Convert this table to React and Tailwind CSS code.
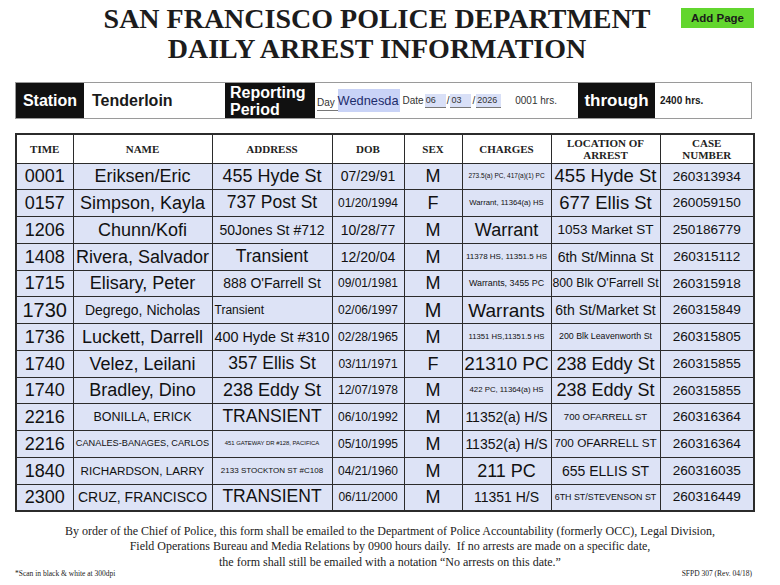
import React from 'react';

const serif = { fontFamily: '"Liberation Serif", "Times New Roman", serif' };

const rows = [
  {
    time: ['0001', 'text-[18px]'],
    name: ['Eriksen/Eric', 'text-[18px]'],
    addr: ['455 Hyde St', 'text-[18px]'],
    dob: ['07/29/91', 'text-[14px]'],
    sex: 'M',
    charges: ['273.5(a) PC, 417(a)(1) PC', 'text-[6.5px]'],
    loc: ['455 Hyde St', 'text-[18.5px]'],
    caseNo: '260313934',
  },
  {
    time: ['0157', 'text-[18px]'],
    name: ['Simpson, Kayla', 'text-[18px]'],
    addr: ['737 Post St', 'text-[17.5px]'],
    dob: ['01/20/1994', 'text-[12px]'],
    sex: 'F',
    charges: ['Warrant, 11364(a) HS', 'text-[7.7px]'],
    loc: ['677 Ellis St', 'text-[18.5px]'],
    caseNo: '260059150',
  },
  {
    time: ['1206', 'text-[18px]'],
    name: ['Chunn/Kofi', 'text-[18px]'],
    addr: ['50Jones St #712', 'text-[14px]'],
    dob: ['10/28/77', 'text-[14px]'],
    sex: 'M',
    charges: ['Warrant', 'text-[18px]'],
    loc: ['1053 Market ST', 'text-[13.5px]'],
    caseNo: '250186779',
  },
  {
    time: ['1408', 'text-[18px]'],
    name: ['Rivera, Salvador', 'text-[18px]'],
    addr: ['Transient', 'text-[17.5px]'],
    dob: ['12/20/04', 'text-[14px]'],
    sex: 'M',
    charges: ['11378 HS, 11351.5 HS', 'text-[8px]'],
    loc: ['6th St/Minna St', 'text-[14px]'],
    caseNo: '260315112',
  },
  {
    time: ['1715', 'text-[18px]'],
    name: ['Elisary, Peter', 'text-[18px]'],
    addr: ['888 O\'Farrell St', 'text-[14px]'],
    dob: ['09/01/1981', 'text-[12px]'],
    sex: 'M',
    charges: ['Warrants, 3455 PC', 'text-[8.9px]'],
    loc: ['800 Blk O\'Farrell St', 'text-[12.3px]'],
    caseNo: '260315918',
  },
  {
    time: ['1730', 'text-[20px]'],
    name: ['Degrego, Nicholas', 'text-[14px]'],
    addr: ['Transient', 'text-[12px]'],
    addrLeft: true,
    dob: ['02/06/1997', 'text-[12px]'],
    sex: 'M',
    sexBig: true,
    charges: ['Warrants', 'text-[19px]'],
    loc: ['6th St/Market St', 'text-[14px]'],
    caseNo: '260315849',
  },
  {
    time: ['1736', 'text-[18px]'],
    name: ['Luckett, Darrell', 'text-[18px]'],
    addr: ['400 Hyde St #310', 'text-[14.4px]'],
    dob: ['02/28/1965', 'text-[12px]'],
    sex: 'M',
    charges: ['11351 HS,11351.5 HS', 'text-[7.7px]'],
    loc: ['200 Blk Leavenworth St', 'text-[8.8px]'],
    caseNo: '260315805',
  },
  {
    time: ['1740', 'text-[18px]'],
    name: ['Velez, Leilani', 'text-[18px]'],
    addr: ['357 Ellis St', 'text-[17.5px]'],
    dob: ['03/11/1971', 'text-[12px]'],
    sex: 'F',
    charges: ['21310 PC', 'text-[19px]'],
    loc: ['238 Eddy St', 'text-[18px]'],
    caseNo: '260315855',
  },
  {
    time: ['1740', 'text-[18px]'],
    name: ['Bradley, Dino', 'text-[18px]'],
    addr: ['238 Eddy St', 'text-[18px]'],
    dob: ['12/07/1978', 'text-[12px]'],
    sex: 'M',
    charges: ['422 PC, 11364(a) HS', 'text-[7.8px]'],
    loc: ['238 Eddy St', 'text-[18px]'],
    caseNo: '260315855',
  },
  {
    time: ['2216', 'text-[18px]'],
    name: ['BONILLA, ERICK', 'text-[12.5px]'],
    addr: ['TRANSIENT', 'text-[17.5px]'],
    dob: ['06/10/1992', 'text-[12px]'],
    sex: 'M',
    charges: ['11352(a) H/S', 'text-[14px]'],
    loc: ['700 OFARRELL ST', 'text-[9.6px]'],
    caseNo: '260316364',
  },
  {
    time: ['2216', 'text-[18px]'],
    name: ['CANALES-BANAGES, CARLOS', 'text-[9.2px]'],
    addr: ['451 GATEWAY DR #128, PACIFICA', 'text-[5.9px]'],
    dob: ['05/10/1995', 'text-[12px]'],
    sex: 'M',
    charges: ['11352(a) H/S', 'text-[14px]'],
    loc: ['700 OFARRELL ST', 'text-[11.8px]'],
    caseNo: '260316364',
  },
  {
    time: ['1840', 'text-[18px]'],
    name: ['RICHARDSON, LARRY', 'text-[11.7px]'],
    addr: ['2133 STOCKTON ST #C108', 'text-[8px]'],
    dob: ['04/21/1960', 'text-[12px]'],
    sex: 'M',
    charges: ['211 PC', 'text-[18px]'],
    loc: ['655 ELLIS ST', 'text-[14px]'],
    caseNo: '260316035',
  },
  {
    time: ['2300', 'text-[18px]'],
    name: ['CRUZ, FRANCISCO', 'text-[14px]'],
    addr: ['TRANSIENT', 'text-[17.5px]'],
    dob: ['06/11/2000', 'text-[12px]'],
    sex: 'M',
    charges: ['11351 H/S', 'text-[14px]'],
    loc: ['6TH ST/STEVENSON ST', 'text-[8.9px]'],
    caseNo: '260316449',
  },
];

const cell = 'border border-[#2b2b2b] bg-[#dde3f6] px-0 text-center align-middle whitespace-nowrap leading-none overflow-hidden text-[#111]';
const head = 'border border-[#2b2b2b] bg-white text-center align-middle font-bold text-[11px] leading-[12px] text-[#222]';

const DateField = ({ value, w }) => (
  <span className={`inline-block ${w} h-[14px] bg-[#d9e0f7] border-b border-[#777] text-[9px] leading-[12px] pl-[1px] text-[#333]`}>
    {value}
  </span>
);

const App = () => {
  return (
    <div
      className="w-[780px] h-[585px] bg-white text-[#1a1a1a] overflow-hidden"
      style={{ fontFamily: '"Liberation Sans", Arial, sans-serif' }}
    >
      {/* title */}
      <div className="w-[754px] grid grid-cols-[1fr_auto_1fr] pt-[4px]">
        <div />
        <h1 className="text-center font-bold text-[28px] leading-[30px] text-[#1c1c1c]" style={serif}>
          SAN FRANCISCO POLICE DEPARTMENT
          <br />
          DAILY ARREST INFORMATION
        </h1>
        <div className="flex justify-end items-start pt-[4px]">
          <button className="bg-[#62d62e] text-[#1a1a1a] font-bold text-[11.5px] h-[20px] w-[73px] leading-[20px]">
            Add Page
          </button>
        </div>
      </div>

      {/* station / reporting period */}
      <div className="mt-[18px] ml-[15px] w-[737px] h-[37px] border border-[#9a9a9a] flex items-stretch">
        <div className="w-[68px] bg-[#111] text-white font-bold text-[16px] flex items-center justify-center">
          Station
        </div>
        <div className="w-[141px] font-bold text-[16px] flex items-center pl-[8px]">Tenderloin</div>
        <div className="w-[90px] bg-[#111] text-white font-bold text-[16px] leading-[17px] flex flex-col justify-center pl-[5px]">
          <span>Reporting</span>
          <span>Period</span>
        </div>
        <div className="w-[263px] flex items-center pl-[2px] text-[#333]">
          <span className="text-[10px] self-end mb-[7px] border-b border-[#777]">Day&nbsp;</span>
          <span className="inline-block w-[62px] h-[23px] bg-[#c9d3f7] text-[12.8px] leading-[23px] whitespace-nowrap text-[#1d2c6b]">
            Wednesda
          </span>
          <span className="text-[10px] ml-[3px] mr-[1px]">Date</span>
          <DateField value="06" w="w-[21px]" />
          <span className="text-[10px] mx-[1px]">/</span>
          <DateField value="03" w="w-[21px]" />
          <span className="text-[10px] mx-[1px]">/</span>
          <DateField value="2026" w="w-[25px]" />
          <span className="text-[10px] ml-[14px]">0001 hrs.</span>
        </div>
        <div className="w-[77px] bg-[#111] text-white font-bold text-[17px] flex items-center justify-center">
          through
        </div>
        <div className="flex-1 font-bold text-[10px] flex items-center pl-[5px]">2400 hrs.</div>
      </div>

      {/* arrests table */}
      <table className="mt-[14px] ml-[15px] w-[738px] table-fixed border-collapse border-2 border-[#2b2b2b]">
        <colgroup>
          <col className="w-[57px]" />
          <col className="w-[139px]" />
          <col className="w-[120px]" />
          <col className="w-[72px]" />
          <col className="w-[58px]" />
          <col className="w-[89px]" />
          <col className="w-[109px]" />
          <col className="w-[94px]" />
        </colgroup>
        <thead style={serif}>
          <tr className="h-[29px]">
            <th className={head}>TIME</th>
            <th className={head}>NAME</th>
            <th className={head}>ADDRESS</th>
            <th className={head}>DOB</th>
            <th className={head}>SEX</th>
            <th className={head}>CHARGES</th>
            <th className={head}>
              LOCATION OF
              <br />
              ARREST
            </th>
            <th className={head}>
              CASE
              <br />
              NUMBER
            </th>
          </tr>
        </thead>
        <tbody>
          {rows.map((r, i) => (
            <tr key={i} className="h-[26.75px]">
              <td className={`${cell} ${r.time[1]}`}>{r.time[0]}</td>
              <td className={`${cell} ${r.name[1]}`}>{r.name[0]}</td>
              <td className={`${cell} ${r.addr[1]} ${r.addrLeft ? 'text-left pl-[2px]' : ''}`}>{r.addr[0]}</td>
              <td className={`${cell} ${r.dob[1]}`}>{r.dob[0]}</td>
              <td className={`${cell} ${r.sexBig ? 'text-[20px]' : 'text-[18px]'}`}>{r.sex}</td>
              <td className={`${cell} ${r.charges[1]}`}>{r.charges[0]}</td>
              <td className={`${cell} ${r.loc[1]}`}>{r.loc[0]}</td>
              <td className={`${cell} text-[13.6px]`}>{r.caseNo}</td>
            </tr>
          ))}
        </tbody>
      </table>

      {/* footer */}
      <div className="mt-[12px] text-center text-[12px] leading-[15.5px] text-[#222]" style={serif}>
        <p>
          By order of the Chief of Police, this form shall be emailed to the Department of Police Accountability
          (formerly OCC), Legal Division,
        </p>
        <p>Field Operations Bureau and Media Relations by 0900 hours daily.&nbsp; If no arrests are made on a specific date,</p>
        <p>the form shall still be emailed with a notation “No arrests on this date.”</p>
      </div>
      <div className="flex justify-between pl-[15px] pr-[28px] text-[7.5px] leading-[8px] text-[#222]" style={serif}>
        <span>*Scan in black &amp; white at 300dpi</span>
        <span>SFPD 307 (Rev. 04/18)</span>
      </div>
    </div>
  );
};

export default App;
